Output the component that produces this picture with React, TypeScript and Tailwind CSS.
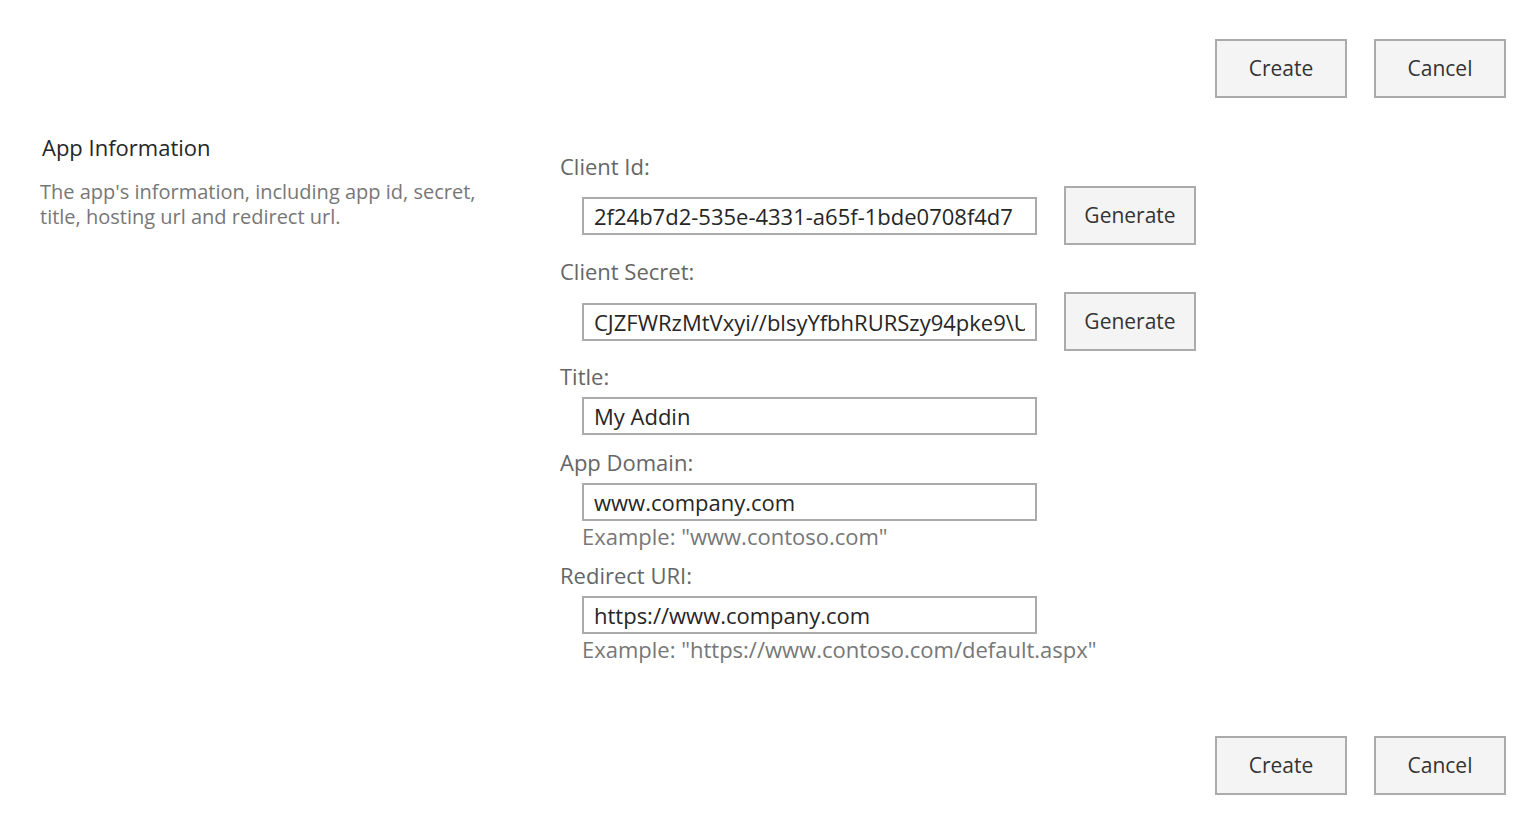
const font = { fontFamily: '"Open Sans", "Noto Sans", sans-serif' }

function Btn({ label }: { label: string }) {
  return (
    <button className="h-[59px] w-[132px] border-2 border-[#ababab] bg-[#f4f4f4] text-[21px] text-[#333]">
      {label}
    </button>
  )
}

function ButtonBar() {
  return (
    <div className="flex justify-end gap-[27px] pr-[34px]">
      <Btn label="Create" />
      <Btn label="Cancel" />
    </div>
  )
}

function Label({ text }: { text: string }) {
  return <div className="h-[28px] text-[22px] leading-[28px] text-[#666]">{text}</div>
}

function Input({ value }: { value: string }) {
  return (
    <input
      readOnly
      value={value}
      className="h-[38px] w-[455px] border-2 border-[#ababab] bg-white px-[10px] text-[22px] text-[#262626] outline-none"
    />
  )
}

function Example({ text }: { text: string }) {
  return <div className="ml-[22px] mt-[1px] text-[22px] leading-[28px] text-[#777]">{text}</div>
}

export default function App() {
  return (
    <div className="h-[830px] w-[1540px] bg-white pt-[39px]" style={font}>
      <ButtonBar />

      <div className="mt-[35px] flex">
        <div className="w-[560px] shrink-0 pl-[40px]">
          <div className="pl-[2px] text-[22px] leading-[28px] text-[#262626]">App Information</div>
          <p className="mt-[18px] w-[450px] text-[20px] leading-[25px] text-[#777]">
            The app's information, including app id, secret, title, hosting url and redirect url.
          </p>
        </div>

        <div className="flex flex-col pt-[19px]">
          <Label text="Client Id:" />
          <div className="mt-[6px] flex items-center gap-[27px] pl-[22px]">
            <Input value="2f24b7d2-535e-4331-a65f-1bde0708f4d7" />
            <Btn label="Generate" />
          </div>

          <div className="mt-[12px]">
            <Label text="Client Secret:" />
          </div>
          <div className="mt-[7px] flex items-center gap-[27px] pl-[22px]">
            <Input value="CJZFWRzMtVxyi//blsyYfbhRURSzy94pke9\UVqWcdY=" />
            <Btn label="Generate" />
          </div>

          <div className="mt-[11px]">
            <Label text="Title:" />
          </div>
          <div className="mt-[7px] pl-[22px]">
            <Input value="My Addin" />
          </div>

          <div className="mt-[13px]">
            <Label text="App Domain:" />
          </div>
          <div className="mt-[7px] pl-[22px]">
            <Input value="www.company.com" />
          </div>
          <Example text={'Example: "www.contoso.com"'} />

          <div className="mt-[11px]">
            <Label text="Redirect URI:" />
          </div>
          <div className="mt-[7px] pl-[22px]">
            <Input value="https://www.company.com" />
          </div>
          <Example text={'Example: "https://www.contoso.com/default.aspx"'} />
        </div>
      </div>

      <div className="mt-[73px]">
        <ButtonBar />
      </div>
    </div>
  )
}
